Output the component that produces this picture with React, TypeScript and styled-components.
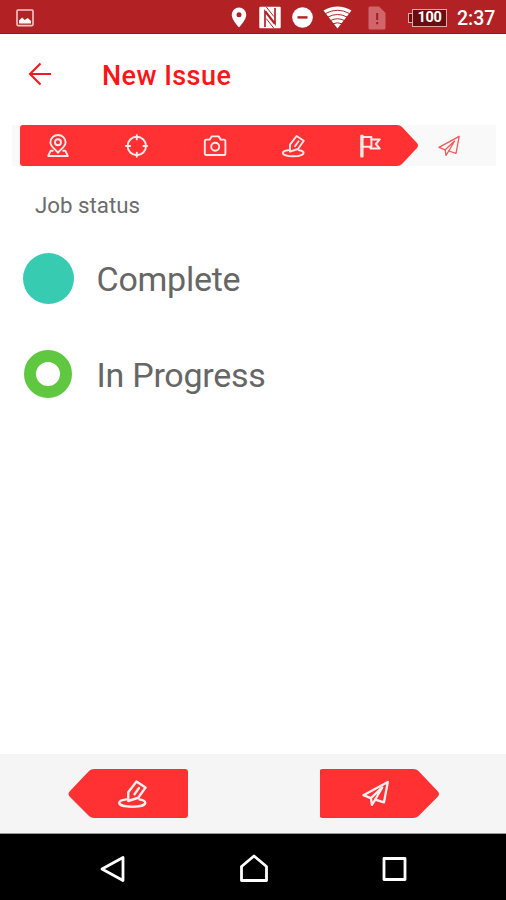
import React from 'react';
import styled, { createGlobalStyle, css } from 'styled-components';

const GlobalStyle = createGlobalStyle`
  *, *::before, *::after { box-sizing: border-box; }
  body { margin: 0; background: #fff; font-family: Roboto, sans-serif; }
  svg { display: block; flex: none; }
`;

const RED = '#ff3133';

const Screen = styled.div`
  width: 506px;
  height: 900px;
  display: flex;
  flex-direction: column;
  background: #fff;
  overflow: hidden;
`;

const StatusBar = styled.header`
  height: 34px;
  flex: none;
  display: flex;
  align-items: center;
  padding: 2px 10px 0 16px;
  background: #b22224;
  border-bottom: 1px solid #a81214;
  color: #fff;
`;

const StatusIcons = styled.div`
  display: flex;
  align-items: center;
  margin-left: auto;
`;

const StatusSlot = styled.span<{ $gap: number }>`
  display: flex;
  margin-right: ${(p) => p.$gap}px;
`;

const Battery = styled.span`
  position: relative;
  width: 35px;
  height: 18px;
  display: flex;
  align-items: center;
  justify-content: center;
  background: #6b0c0e;
  border: 1px solid #e0a9aa;
  font-size: 14.5px;
  font-weight: 700;
  line-height: 16px;
  letter-spacing: -0.4px;
  margin-right: 10px;
  &::before {
    content: '';
    position: absolute;
    left: -5px;
    top: 3px;
    width: 4px;
    height: 10px;
    border: 1px solid #e0a9aa;
    border-right: 0;
    background: #6b0c0e;
  }
`;

const Clock = styled.span`
  font-size: 19.5px;
  font-weight: 500;
  line-height: 30px;
  width: 39px;
  white-space: nowrap;
  padding-top: 2px;
`;

const TitleBar = styled.div`
  height: 91px;
  flex: none;
  display: flex;
  align-items: center;
  padding: 0 0 12px 28px;
  gap: 50px;
`;

const Title = styled.h1`
  margin: 0;
  padding-top: 4px;
  color: #f91618;
  font-size: 27px;
  font-weight: 500;
  line-height: 32px;
  letter-spacing: 0.45px;
`;

const Steps = styled.nav`
  position: relative;
  height: 41px;
  flex: none;
  margin: 0 10px 0 12px;
  padding: 0 7.5px 0 7px;
  display: grid;
  grid-template-columns: repeat(6, 1fr);
  background: #f9f9f9;
`;

const StepsFill = styled.div`
  position: absolute;
  left: 8px;
  top: 0;
  width: 399px;
  height: 41px;
  background: ${RED};
  clip-path: path('M3 0H377Q380 0 382 2L397 18Q399 20.5 397 23L382 39Q380 41 377 41H3Q0 41 0 38V3Q0 0 3 0Z');
`;

const Step = styled.div<{ $done: boolean }>`
  position: relative;
  display: flex;
  align-items: center;
  justify-content: center;
  color: ${(p) => (p.$done ? '#ffe9e9' : '#f0585a')};
`;

const Content = styled.main`
  flex: 1;
  display: flex;
  flex-direction: column;
  padding: 24px 23px 0;
`;

const SectionLabel = styled.h2`
  margin: 0 0 31px 12px;
  color: #6c6c6c;
  font-size: 22.3px;
  font-weight: 400;
  line-height: 30px;
`;

const Option = styled.div`
  height: 96px;
  display: flex;
  align-items: center;
  padding-bottom: 42px;
  gap: 22.5px;
  color: #666;
  font-size: 34px;
  letter-spacing: -0.25px;
  line-height: 40px;
`;

const OptionDot = styled.span<{ $ring?: boolean }>`
  width: 51px;
  height: 51px;
  flex: none;
  border-radius: 50%;
  background: #37cbb2;
  ${(p) =>
    p.$ring &&
    css`
      width: 48px;
      height: 48px;
      margin: 0 2px 0 1px;
      background: #fff;
      border: 12.5px solid #60c741;
    `}
`;

const OptionText = styled.span`
  padding-top: 1px;
`;

const Footer = styled.footer`
  height: 80px;
  flex: none;
  display: flex;
  justify-content: space-between;
  padding: 15px 66.5px 0 68px;
  background: #f5f5f5;
  border-bottom: 1px solid #999;
`;

const ArrowButton = styled.button<{ $dir: 'back' | 'next' }>`
  width: 120px;
  height: 50px;
  border: 0;
  display: flex;
  align-items: center;
  justify-content: center;
  background: ${RED};
  color: #fff0f0;
  padding: ${(p) => (p.$dir === 'back' ? '0 0 0 7px' : '0 9px 1px 0')};
  clip-path: ${(p) =>
    p.$dir === 'back'
      ? "path('M117 0H26Q23 0 21 2L2 22Q-1 25 2 28L21 47Q23 49 26 49H117Q120 49 120 46V3Q120 0 117 0Z')"
      : "path('M3 0H94Q97 0 99 2L118 22Q121 25 118 28L99 47Q97 49 94 49H3Q0 49 0 46V3Q0 0 3 0Z')"};
`;

const SystemNav = styled.div`
  height: 66px;
  flex: none;
  display: grid;
  grid-template-columns: repeat(3, 141px);
  justify-content: center;
  align-items: center;
  justify-items: center;
  padding: 4px 0 0 1px;
  background: #000;
`;

type IconProps = { size?: number; stroke?: number; children: React.ReactNode };

const LineIcon = ({ size = 24, stroke = 1.9, children }: IconProps) => (
  <svg
    width={size}
    height={size}
    viewBox="0 0 24 24"
    fill="none"
    stroke="currentColor"
    strokeWidth={stroke}
    strokeLinejoin="round"
    strokeLinecap="round"
  >
    {children}
  </svg>
);

const LocationIcon = () => (
  <LineIcon>
    <path d="M12 18.8C9.6 15.4 4.4 12.4 4.4 8.4a7.6 7.4 0 0 1 15.2 0c0 4-5.2 7-7.6 10.4Z" />
    <circle cx="12" cy="8.2" r="3" />
    <path d="M6.8 16.8H4.6L2.2 22H21.8L19.4 16.8H17.2" />
  </LineIcon>
);

const TargetIcon = () => (
  <LineIcon>
    <circle cx="12.8" cy="12" r="9.2" />
    <path d="M12.8 1.2V5.4M12.8 18.6V22.8M2 12H6.2M19.4 12H23.2" />
  </LineIcon>
);

const CameraIcon = () => (
  <LineIcon>
    <path d="M1.8 7.2Q1.8 5.6 3.4 5.6H6.6L8.8 2.4H15.6L17.8 5.6H20.8Q22.4 5.6 22.4 7.2V19.4Q22.4 21 20.8 21H3.4Q1.8 21 1.8 19.4Z" />
    <circle cx="12.2" cy="12.8" r="4" />
  </LineIcon>
);

const SignIcon = ({ size }: { size?: number }) => (
  <LineIcon size={size}>
    <path d="M9 17.6V10.6L15.6 2L22.8 6.8L17 15L9 17.6Z" />
    <path d="M17.6 7.2L14 12.2" />
    <path d="M7.4 16.3C4 16.7 1.8 17.7 1.8 19c0 1.9 4.6 3.2 10.4 3.2S22.6 20.9 22.6 19c0-1.3-2-2.3-4.6-2.7" />
  </LineIcon>
);

const FlagIcon = () => (
  <LineIcon stroke={2}>
    <path d="M2.2 22.4V1.8H3.6V22.4Z" />
    <path d="M3.6 3H12.4V12.8H3.6" />
    <path d="M12.4 5.4H20.8L16.800 10L20.800 14.600H11.400V12.800" />
  </LineIcon>
);

const SendIcon = ({ size, stroke }: { size?: number; stroke?: number }) => (
  <LineIcon size={size} stroke={stroke}>
    <path d="M2 13.4L22.2 2.4L19 19.4L11.8 17L9 21.4L8.2 15.8Z" />
    <path d="M8.2 15.8L17.6 7L11.8 17" />
  </LineIcon>
);

const PictureIcon = () => (
  <svg width="18" height="18" viewBox="0 0 18 18">
    <rect x="1" y="1" width="16" height="15.6" rx="1" fill="none" stroke="#f0c9ca" strokeWidth="1.6" />
    <path d="M3 14.5V11.5L6.2 8.5L8.6 11L11.8 9L15 12V14.5Z" fill="#fff" />
  </svg>
);

const PlaceIcon = () => (
  <svg width="16" height="21" viewBox="0 0 16 21">
    <path
      fill="#fff"
      fillRule="evenodd"
      d="M8 0.5A7.3 7.3 0 0 0 .7 7.8C.7 13 8 20.5 8 20.5S15.3 13 15.3 7.8A7.3 7.3 0 0 0 8 .5ZM8 5.2a2.5 2.5 0 1 1 0 5a2.5 2.5 0 0 1 0-5Z"
    />
  </svg>
);

const NfcIcon = () => (
  <svg width="22" height="23" viewBox="0 0 22 23" fill="none">
    <rect x="0.3" y="0.8" width="21.4" height="21.4" rx="1" fill="#fff" />
    <path stroke="#b22224" strokeWidth="1.700" d="M6 21V5.500L15.500 17.800M16 2V17.500L6.500 5.200" />
    <path stroke="#b22224" strokeWidth="1" d="M7.200 0.800L14.800 10.500M7.200 12.500L14.800 22.200" />
  </svg>
);

const DoNotDisturbIcon = () => (
  <svg width="21" height="21" viewBox="0 0 21 21">
    <circle cx="10.5" cy="10.5" r="10.3" fill="#fff" />
    <rect x="5.5" y="9.2" width="10" height="2.4" fill="#b22224" />
  </svg>
);

const WifiIcon = () => (
  <svg width="29" height="23" viewBox="0 0 29 23">
    <path fill="#fff" d="M.5 4.5Q14.5-3.5 28.5 4.5L14.5 22.5Z" />
    <path
      fill="none"
      stroke="#b22224"
      strokeWidth="1"
      d="M2.5 7.5Q14.5 1 26.5 7.5M5 11Q14.5 6 24 11M7.5 14.5Q14.5 11 21.5 14.5M10 17.8Q14.5 15.8 19 17.8"
    />
  </svg>
);

const SimAlertIcon = () => (
  <svg width="18" height="24" viewBox="0 0 18 24">
    <path fill="#d0666a" d="M2 .5H11L17.5 7V22Q17.5 23.5 16 23.5H2Q.5 23.5 .5 22V2Q.5 .5 2 .5Z" />
    <path stroke="#a81a1e" strokeWidth="2" d="M9.2 7V14M9.2 16V18.2" />
  </svg>
);

const BackArrow = () => (
  <svg width="24" height="24" viewBox="0 0 24 24" fill="none" stroke="#f5191b" strokeWidth="2.1">
    <path d="M23 12H2M12.5 1.5L2 12L12.5 22.5" />
  </svg>
);

const NavIcon = ({ d }: { d: string }) => (
  <svg width="30" height="30" viewBox="0 0 30 30" fill="none" stroke="#fff" strokeWidth="2.8" strokeLinejoin="round">
    <path d={d} />
  </svg>
);

const steps = [
  { id: 'location', icon: <LocationIcon />, done: true },
  { id: 'target', icon: <TargetIcon />, done: true },
  { id: 'photo', icon: <CameraIcon />, done: true },
  { id: 'notes', icon: <SignIcon />, done: true },
  { id: 'status', icon: <FlagIcon />, done: true },
  { id: 'send', icon: <SendIcon stroke={1.3} />, done: false },
];

export default function App() {
  return (
    <Screen>
      <GlobalStyle />
      <StatusBar>
        <PictureIcon />
        <StatusIcons>
          <StatusSlot $gap={12}><PlaceIcon /></StatusSlot>
          <StatusSlot $gap={11}><NfcIcon /></StatusSlot>
          <StatusSlot $gap={10}><DoNotDisturbIcon /></StatusSlot>
          <StatusSlot $gap={16}><WifiIcon /></StatusSlot>
          <StatusSlot $gap={26}><SimAlertIcon /></StatusSlot>
          <Battery>100</Battery>
          <Clock>2:37</Clock>
        </StatusIcons>
      </StatusBar>
      <TitleBar>
        <BackArrow />
        <Title>New Issue</Title>
      </TitleBar>
      <Steps>
        <StepsFill />
        {steps.map((s) => (
          <Step key={s.id} $done={s.done}>{s.icon}</Step>
        ))}
      </Steps>
      <Content>
        <SectionLabel>Job status</SectionLabel>
        <Option>
          <OptionDot />
          <OptionText>Complete</OptionText>
        </Option>
        <Option>
          <OptionDot $ring />
          <OptionText>In Progress</OptionText>
        </Option>
      </Content>
      <Footer>
        <ArrowButton $dir="back" aria-label="Back"><SignIcon size={30} /></ArrowButton>
        <ArrowButton $dir="next" aria-label="Next"><SendIcon size={29} /></ArrowButton>
      </Footer>
      <SystemNav>
        <NavIcon d="M4 15L25 3.5V26.5Z" />
        <NavIcon d="M2.5 12.5L15 2L27.5 12.5V26.5H2.5Z" />
        <NavIcon d="M4 4.5H25V25.5H4Z" />
      </SystemNav>
    </Screen>
  );
}
